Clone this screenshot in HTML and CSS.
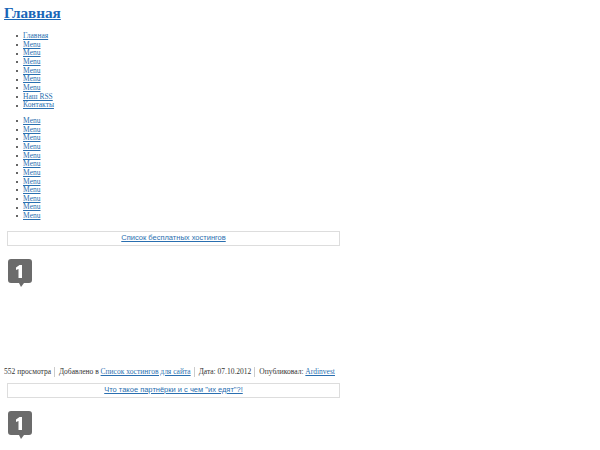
FILE: index.html
```html
<!DOCTYPE html>
<html lang="ru">
<head>
    <meta charset="UTF-8">
    <title>Главная</title>
    <link rel="stylesheet" href="styles.css">
</head>
<body>
    <h1 class="site-title"><a href="#">Главная</a></h1>

    <ul class="menu">
        <li><a href="#">Главная</a></li>
        <li><a href="#">Menu</a></li>
        <li><a href="#">Menu</a></li>
        <li><a href="#">Menu</a></li>
        <li><a href="#">Menu</a></li>
        <li><a href="#">Menu</a></li>
        <li><a href="#">Menu</a></li>
        <li><a href="#">Наш RSS</a></li>
        <li><a href="#">Контакты</a></li>
    </ul>

    <ul class="menu">
        <li><a href="#">Menu</a></li>
        <li><a href="#">Menu</a></li>
        <li><a href="#">Menu</a></li>
        <li><a href="#">Menu</a></li>
        <li><a href="#">Menu</a></li>
        <li><a href="#">Menu</a></li>
        <li><a href="#">Menu</a></li>
        <li><a href="#">Menu</a></li>
        <li><a href="#">Menu</a></li>
        <li><a href="#">Menu</a></li>
        <li><a href="#">Menu</a></li>
        <li><a href="#">Menu</a></li>
    </ul>

    <div class="post">
        <h2 class="post-title"><a href="#">Список бесплатных хостингов</a></h2>
        <div class="post-body">
            <svg class="badge" width="24" height="29" viewBox="0 0 24 29">
                <path d="M3 0H21Q24 0 24 3V21Q24 24 21 24H16L13 28L11 24H3Q0 24 0 21V3Q0 0 3 0Z" fill="#6b6b6b"/>
                <path d="M14 6V19H10.500V10L8 11V8.500L11.500 6Z" fill="#fff"/>
            </svg>
        </div>
        <p class="post-meta">
            <span>552 просмотра</span>
            <span>Добавлено в <a href="#">Список хостингов для сайта</a></span>
            <span>Дата: 07.10.2012</span>
            <span>Опубликовал: <a href="#">Ardinvest</a></span>
        </p>
    </div>

    <div class="post">
        <h2 class="post-title"><a href="#">Что такое партнёрки и с чем "их едят"?!</a></h2>
        <div class="post-body">
            <svg class="badge" width="24" height="29" viewBox="0 0 24 29">
                <path d="M3 0H21Q24 0 24 3V21Q24 24 21 24H16L13 28L11 24H3Q0 24 0 21V3Q0 0 3 0Z" fill="#6b6b6b"/>
                <path d="M14 6V19H10.500V10L8 11V8.500L11.500 6Z" fill="#fff"/>
            </svg>
        </div>
    </div>
</body>
</html>
```

FILE: styles.css
```css
html, body {
    height: 450px;
    overflow: hidden;
}
body {
    margin: 0;
    padding: 0 4px;
    background: #fff;
    color: #333;
    font-family: "Liberation Serif", serif;
    font-size: 7.5px;
    line-height: 8.65px;
}
a {
    color: #2a6fb0;
}
.site-title {
    margin: 0;
    padding-top: 5px;
    font-size: 15.2px;
    line-height: 16px;
}
.site-title a {
    color: #1a66b8;
}
.menu {
    margin: 11px 0 0;
    padding-left: 12px;
    list-style: none;
}
.menu + .menu {
    margin-top: 7px;
}
.menu li {
    display: flex;
    align-items: center;
    gap: 5px;
}
.menu li::before {
    content: "";
    width: 2px;
    height: 2px;
    border-radius: 50%;
    background: #333;
}
.post-title {
    margin: 10px 0 0 3px;
    width: 333px;
    height: 15px;
    box-sizing: border-box;
    border: 1px solid #ddd;
    font-family: "Liberation Sans", sans-serif;
    font-size: 7.5px;
    font-weight: normal;
    line-height: 12px;
    text-align: center;
}
.post-body {
    height: 121px;
    padding: 13px 0 0 4px;
    box-sizing: border-box;
}
.badge {
    display: block;
}
.post-meta {
    display: flex;
    margin: 0;
    line-height: 10px;
}
.post-meta span + span {
    margin-left: 3px;
    padding-left: 4px;
    border-left: 1px solid #ccc;
}
.post + .post .post-title {
    margin-top: 6px;
}
.post:last-child .post-body {
    height: auto;
}
```
